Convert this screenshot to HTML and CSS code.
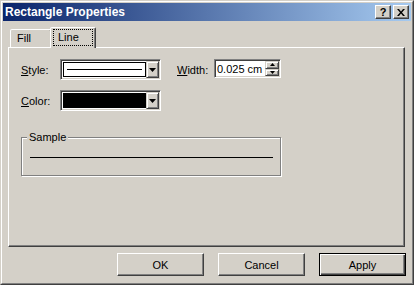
FILE: index.html
```html
<!DOCTYPE html>
<html lang="en">
<head>
    <meta charset="UTF-8">
    <title>Rectangle Properties</title>
    <link rel="stylesheet" href="styles.css">
</head>
<body>
    <div class="window">
        <div class="frame">
            <div class="titlebar">
                <span class="title">Rectangle Properties</span>
                <span class="caption-buttons">
                    <span class="caption-btn help">?</span>
                    <span class="caption-btn">
                        <svg width="8" height="7" viewBox="0 0 8 7">
                            <path d="M0 0h2l2 2.5L6 0h2L5 3.5 8 7H6L4 4.5 2 7H0l3-3.5z" fill="#000"/>
                        </svg>
                    </span>
                </span>
            </div>

            <div class="content">
                <div class="tabs">
                    <div class="tab">Fill</div>
                    <div class="tab tab-active"><span class="focus">Line</span></div>
                </div>

                <div class="panel">
                    <div class="row">
                        <label class="field-label"><u>S</u>tyle:</label>
                        <div class="combo">
                            <div class="combo-field style-field"><div class="line-preview"></div></div>
                            <div class="combo-btn">
                                <svg width="7" height="4" viewBox="0 0 7 4"><path d="M0 0h7L3.5 4z" fill="#000"/></svg>
                            </div>
                        </div>
                        <label class="width-label"><u>W</u>idth:</label>
                        <div class="spin-edit">
                            <div class="edit">0.025 cm</div>
                            <div class="spin">
                                <span class="spin-btn"><svg width="5" height="3" viewBox="0 0 5 3"><path d="M2.5 0L5 3H0z" fill="#000"/></svg></span>
                                <span class="spin-btn"><svg width="5" height="3" viewBox="0 0 5 3"><path d="M0 0h5L2.5 3z" fill="#000"/></svg></span>
                            </div>
                        </div>
                    </div>

                    <div class="row row-color">
                        <label class="field-label"><u>C</u>olor:</label>
                        <div class="combo">
                            <div class="combo-field color-field"></div>
                            <div class="combo-btn">
                                <svg width="7" height="4" viewBox="0 0 7 4"><path d="M0 0h7L3.5 4z" fill="#000"/></svg>
                            </div>
                        </div>
                    </div>

                    <fieldset class="group">
                        <legend>Sample</legend>
                        <div class="sample-line"></div>
                    </fieldset>
                </div>

                <div class="footer">
                    <button class="btn">OK</button>
                    <button class="btn">Cancel</button>
                    <button class="btn btn-default">Apply</button>
                </div>
            </div>
        </div>
    </div>
</body>
</html>
```

FILE: styles.css
```css
body {
    margin: 0;
    background: #d4d0c8;
}

.window {
    width: 414px;
    height: 285px;
    box-sizing: border-box;
    border: 1px solid;
    border-color: #d4d0c8 #404040 #404040 #d4d0c8;
    background: #d4d0c8;
    font: 11px "Liberation Sans", Arial, sans-serif;
    color: #000;
}

.frame {
    height: 100%;
    box-sizing: border-box;
    border: 1px solid;
    border-color: #fff #808080 #808080 #fff;
    padding: 1px;
    display: flex;
    flex-direction: column;
}

/* title bar */
.titlebar {
    height: 18px;
    display: flex;
    align-items: center;
    justify-content: space-between;
    padding: 0 2px;
    background: linear-gradient(to right, #0a246a, #a6caf0);
    color: #fff;
    font-weight: bold;
    font-size: 12px;
}

.caption-buttons {
    display: flex;
    gap: 2px;
}

.caption-btn {
    width: 16px;
    height: 14px;
    box-sizing: border-box;
    display: flex;
    align-items: center;
    justify-content: center;
    background: #d4d0c8;
    border: 1px solid;
    border-color: #fff #404040 #404040 #fff;
    box-shadow: inset -1px -1px #808080;
    color: #000;
}

    .caption-btn.help {
        font-size: 11px;
        font-weight: bold;
        line-height: 1;
    }

/* dialog content */
.content {
    flex: 1;
    display: flex;
    flex-direction: column;
    padding: 0 6px 0 5px;
}

.tabs {
    height: 26px;
    display: flex;
    align-items: flex-end;
    padding-left: 2px;
}

.tab {
    width: 42px;
    height: 18px;
    box-sizing: border-box;
    padding: 2px 0 0 6px;
    border: 1px solid;
    border-bottom: none;
    border-color: #fff #404040 transparent #fff;
    border-radius: 2px 2px 0 0;
    box-shadow: inset -1px 0 #808080;
    background: #d4d0c8;
}

.tab-active {
    width: 46px;
    height: 21px;
    margin: 0 -2px -1px -2px;
    padding: 1px 0 0 2px;
    position: relative;
    z-index: 1;
}

    .tab-active .focus {
        display: block;
        width: 40px;
        height: 17px;
        box-sizing: border-box;
        padding: 1px 0 0 4px;
        border: 1px dotted #000;
    }

.panel {
    height: 200px;
    box-sizing: border-box;
    padding: 11px 0 0 12px;
    border: 1px solid;
    border-color: #fff #404040 #404040 #fff;
    box-shadow: inset -1px -1px #808080;
}

.row {
    display: flex;
    align-items: center;
    height: 21px;
}

.row-color {
    margin-top: 10px;
}

.field-label {
    width: 39px;
}

.width-label {
    width: 37px;
    margin-left: 16px;
}

.combo {
    width: 101px;
    height: 21px;
    box-sizing: border-box;
    display: flex;
    border: 1px solid;
    border-color: #808080 #fff #fff #808080;
    box-shadow: inset 1px 1px #404040, inset -1px -1px #d4d0c8;
    padding: 1px;
    background: #fff;
}

.combo-field {
    flex: 1;
    box-sizing: border-box;
    margin: 1px 0 1px 1px;
}

.style-field {
    border: 1px solid #000;
    display: flex;
    align-items: center;
    padding: 0 3px;
}

.line-preview {
    flex: 1;
    height: 1px;
    background: #000;
}

.color-field {
    background: #000;
}

.combo-btn {
    width: 13px;
    box-sizing: border-box;
    display: flex;
    align-items: center;
    justify-content: center;
    background: #d4d0c8;
    border: 1px solid;
    border-color: #d4d0c8 #404040 #404040 #d4d0c8;
    box-shadow: inset 1px 1px #fff, inset -1px -1px #808080;
}

.spin-edit {
    width: 67px;
    height: 19px;
    box-sizing: border-box;
    display: flex;
    align-self: flex-start;
    border: 1px solid;
    border-color: #808080 #fff #fff #808080;
    box-shadow: inset 1px 1px #404040, inset -1px -1px #d4d0c8;
    padding: 1px;
    background: #fff;
}

.edit {
    flex: 1;
    padding: 2px 0 0 1px;
    white-space: nowrap;
    overflow: hidden;
}

.spin {
    width: 14px;
    display: flex;
    flex-direction: column;
}

.spin-btn {
    flex: 1;
    display: flex;
    align-items: center;
    justify-content: center;
    background: #d4d0c8;
    box-sizing: border-box;
    border: 1px solid;
    border-color: #d4d0c8 #404040 #404040 #d4d0c8;
    box-shadow: inset 1px 1px #fff, inset -1px -1px #808080;
}

.group {
    width: 260px;
    box-sizing: border-box;
    margin: 20px 0 0 0;
    padding: 0;
    border: 1px solid #808080;
    box-shadow: inset 1px 1px #fff, 1px 1px #fff;
}

    .group legend {
        margin-left: 5px;
        padding: 0 2px;
        background: #d4d0c8;
    }

.sample-line {
    height: 1px;
    margin: 14px 7px 17px 8px;
    background: #000;
}

/* buttons */
.footer {
    display: flex;
    justify-content: flex-end;
    gap: 14px;
    margin: 6px -1px 0 0;
}

.btn {
    width: 87px;
    height: 23px;
    font: inherit;
    color: #000;
    background: #d4d0c8;
    border: 1px solid;
    border-color: #fff #404040 #404040 #fff;
    box-shadow: inset -1px -1px #808080;
    padding: 0;
}

.btn-default {
    border-color: #000;
    box-shadow: inset 1px 1px #fff, inset -1px -1px #404040, inset -2px -2px #808080;
}
```
